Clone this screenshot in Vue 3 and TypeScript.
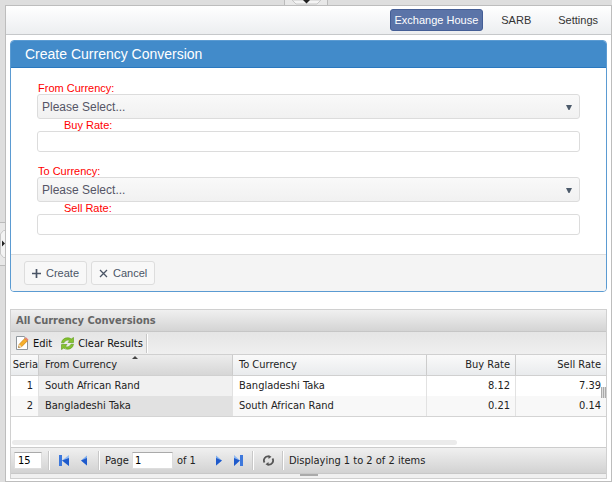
<script setup lang="ts">
import { ref } from 'vue'

interface Conversion {
  serial: number
  from: string
  to: string
  buy: string
  sell: string
}

const navItems = ['Exchange House', 'SARB', 'Settings']
const active = ref('Exchange House')

const fromCurrency = ref('')
const toCurrency = ref('')
const buyRate = ref('')
const sellRate = ref('')
const pageSize = ref('15')
const page = ref('1')

const currencies = ['South African Rand', 'Bangladeshi Taka']

const rows: Conversion[] = [
  { serial: 1, from: 'South African Rand', to: 'Bangladeshi Taka', buy: '8.12', sell: '7.39' },
  { serial: 2, from: 'Bangladeshi Taka', to: 'South African Rand', buy: '0.21', sell: '0.14' },
]

function reset() {
  fromCurrency.value = ''
  toCurrency.value = ''
  buyRate.value = ''
  sellRate.value = ''
}
</script>

<template>
  <div class="shell">
    <div class="split-top">
      <div class="tab-top">
        <svg width="29" height="5" viewBox="0 0 29 5">
          <path d="M0 0h29l-4 4H4z" fill="#f4f4f4" stroke="#c8c8c8" stroke-width="1" />
          <path d="M11 0h7l-3.5 3.5z" fill="#222" />
        </svg>
      </div>
    </div>
    <div class="split-left">
      <div class="tab-left">
        <svg width="5" height="28" viewBox="0 0 5 28">
          <path d="M5.5 .5h-2L.5 4v20l3 3.5h2" fill="#f4f4f4" stroke="#c8c8c8" />
          <path d="M2 10.5v6l3-3z" fill="#222" />
        </svg>
      </div>
    </div>

    <main class="main">
      <nav class="nav">
        <a
          v-for="item in navItems"
          :key="item"
          href="#"
          class="nav-link"
          :class="{ active: item === active }"
          @click.prevent="active = item"
        >{{ item }}</a>
      </nav>

      <form class="card" @submit.prevent>
        <h1 class="card-title">Create Currency Conversion</h1>
        <div class="card-body">
          <div class="group">
            <label class="label" for="from">From Currency:</label>
            <div class="select-box">
              <select id="from" v-model="fromCurrency" class="select">
                <option value="">Please Select...</option>
                <option v-for="c in currencies" :key="c">{{ c }}</option>
              </select>
              <svg class="arrow" width="6" height="5" viewBox="0 0 6 5"><path d="M0 0h6L3.5 5h-1z" fill="#4d5b6b" /></svg>
            </div>
            <label class="label indent" for="buy">Buy Rate:</label>
            <input id="buy" v-model="buyRate" class="text" type="text" />
          </div>
          <div class="group">
            <label class="label" for="to">To Currency:</label>
            <div class="select-box">
              <select id="to" v-model="toCurrency" class="select">
                <option value="">Please Select...</option>
                <option v-for="c in currencies" :key="c">{{ c }}</option>
              </select>
              <svg class="arrow" width="6" height="5" viewBox="0 0 6 5"><path d="M0 0h6L3.5 5h-1z" fill="#4d5b6b" /></svg>
            </div>
            <label class="label indent" for="sell">Sell Rate:</label>
            <input id="sell" v-model="sellRate" class="text" type="text" />
          </div>
        </div>
        <div class="card-foot">
          <button type="submit" class="btn">
            <svg width="9" height="9" viewBox="0 0 9 9"><path d="M4.5 0v9M0 4.5h9" stroke="#4a5566" stroke-width="1.7" /></svg>
            Create
          </button>
          <button type="button" class="btn" @click="reset">
            <svg width="9" height="9" viewBox="0 0 9 9"><path d="M1 1l7 7M8 1l-7 7" stroke="#4a5566" stroke-width="1.3" /></svg>
            Cancel
          </button>
        </div>
      </form>

      <section class="grid">
        <h2 class="grid-title">All Currency Conversions</h2>
        <div class="toolbar">
          <button type="button" class="tool">
            <svg width="13" height="14" viewBox="0 0 13 14">
              <path d="M.5 .5h8l3 3v10H.5z" fill="#fff" stroke="#8f969c" />
              <path d="M8.5 .5v3h3" fill="#dde3e8" stroke="#a9b0b6" stroke-width=".8" />
              <path d="M2.5 11.5l.8-3.3L8.8 2.5l2.5 2.4-5.6 5.8z" fill="#f6b02c" stroke="#c97d12" stroke-width=".7" />
              <path d="M8.8 2.5l1.2-1.2 2.5 2.4-1.2 1.2z" fill="#e98274" />
              <path d="M2.5 11.5l.8-3.3 2.4 2.5z" fill="#f3dfba" />
              <path d="M2.5 11.5l.3-1.2.9.9z" fill="#333" />
            </svg>
            Edit
          </button>
          <button type="button" class="tool">
            <svg width="13" height="13" viewBox="0 0 13 13" fill="#86c232" stroke="#5a9a16" stroke-width=".6">
              <path d="M.5 5.8C1 2.5 3.5 .8 6.5 .8c1.5 0 2.8.4 3.7 1.2L12.500 .5v5H7l1.8-1.9C7 2.6 4.3 3 3 5.8z" />
              <path d="M12.500 7.2c-.5 3.3-3 5-6 5-1.5 0-2.8-.4-3.7-1.2L.5 12.5v-5H6L4.2 9.4C6 10.4 8.7 10 10 7.2z" />
            </svg>
            Clear Results
          </button>
          <span class="sep"></span>
        </div>

        <div class="table-area">
          <table class="table">
            <colgroup>
              <col class="c-serial" /><col class="c-name" /><col class="c-name" /><col class="c-buy" /><col />
            </colgroup>
            <thead>
              <tr>
                <th>Seria</th>
                <th class="sorted">
                  From Currency
                  <svg class="sort" width="6" height="3" viewBox="0 0 6 3"><path d="M0 3l3-3 3 3z" fill="#444" /></svg>
                </th>
                <th>To Currency</th>
                <th class="num">Buy Rate</th>
                <th class="num">Sell Rate</th>
              </tr>
            </thead>
            <tbody>
              <tr v-for="r in rows" :key="r.serial">
                <td class="num">{{ r.serial }}</td>
                <td class="sorted">{{ r.from }}</td>
                <td>{{ r.to }}</td>
                <td class="num">{{ r.buy }}</td>
                <td class="num">{{ r.sell }}</td>
              </tr>
            </tbody>
          </table>
          <div class="grip"></div>
          <div class="scroll-x"><div class="thumb"></div></div>
        </div>

        <div class="pager">
          <input v-model="pageSize" class="box size" type="text" aria-label="Page size" />
          <span class="sep"></span>
          <button type="button" class="icon" aria-label="First page">
            <svg width="11" height="11" viewBox="0 0 11 11">
              <path d="M0 0h3v11H0z" fill="#3d78dc" /><path d="M10 0v11L3 5.5z" fill="#8db8f3" /><path d="M10 3v8L3 5.5z" fill="#1f5acb" />
            </svg>
          </button>
          <button type="button" class="icon" aria-label="Previous page">
            <svg width="11" height="11" viewBox="0 0 11 11"><path d="M8 .5v10L2 5.5z" fill="#7babed" /><path d="M8 3v7.5L2 5.5z" fill="#1f5acb" /></svg>
          </button>
          <span class="sep"></span>
          <label class="page" for="page">Page</label>
          <input id="page" v-model="page" class="box number" type="text" />
          <span class="of">of 1</span>
          <button type="button" class="icon" aria-label="Next page">
            <svg width="11" height="11" viewBox="0 0 11 11"><path d="M3 .5v10l6-5z" fill="#7babed" /><path d="M3 3v7.5l6-5z" fill="#1f5acb" /></svg>
          </button>
          <button type="button" class="icon" aria-label="Last page">
            <svg width="11" height="11" viewBox="0 0 11 11">
              <path d="M7 0h3v11H7z" fill="#3d78dc" /><path d="M1 0v11l6-5.5z" fill="#8db8f3" /><path d="M1 3v8l6-5.5z" fill="#1f5acb" />
            </svg>
          </button>
          <span class="sep"></span>
          <button type="button" class="icon" aria-label="Refresh">
            <svg width="11" height="11" viewBox="0 0 11 11" fill="none" stroke="#555" stroke-width="1.8">
              <path d="M1.5 7.5A4 4 0 0 1 6 1.6M9.5 3.5A4 4 0 0 1 5 9.4" />
              <path d="M5.5 0l3 1.8-3 2.2zM5.5 11l-3-1.8 3-2.2z" fill="#555" stroke="none" />
            </svg>
          </button>
          <span class="sep"></span>
          <span class="status">Displaying 1 to 2 of 2 items</span>
        </div>
        <div class="resizer"><span class="resizer-grip"></span></div>
      </section>
    </main>
  </div>
</template>

<style>
body {
  background: #dedede;
}
</style>

<style scoped>
.shell {
  display: grid;
  grid-template-columns: 5px 1fr;
  grid-template-rows: 5px 1fr;
  min-height: 100vh;
  font-family: "Liberation Sans", Arial, sans-serif;
  font-size: 11px;
}
.shell * {
  box-sizing: border-box;
}
svg {
  display: block;
  flex: none;
}
button,
input,
select {
  font: inherit;
  margin: 0;
}
.split-top {
  grid-column: 1 / 3;
  display: flex;
  justify-content: center;
}
.tab-top {
  display: flex;
  justify-content: center;
  width: 44px;
  background: #e8e8e8;
  border: solid #bbb;
  border-width: 0 1px;
}
.split-left {
  display: flex;
  align-items: center;
}
.tab-left {
  display: flex;
  align-items: center;
  height: 44px;
  background: #e8e8e8;
  border: solid #bbb;
  border-width: 1px 0;
}
.main {
  min-width: 0;
  background: #fff;
  border: 1px solid #bdbdbd;
}
.nav {
  display: flex;
  justify-content: flex-end;
  align-items: center;
  gap: 9px;
  height: 29px;
  padding: 0 4px;
  background: linear-gradient(#fff, #eceef0);
  border-bottom: 1px solid #c6c8ca;
}
.nav-link {
  padding: 0 8px;
  height: 22px;
  line-height: 20px;
  border: 1px solid transparent;
  border-radius: 3px;
  color: #333;
  text-decoration: none;
}
.nav-link.active {
  padding: 0 4px;
  background: #5b74a8;
  border-color: #445e96;
  color: #fff;
}
.card {
  margin: 5px 4px 0;
  border: 1px solid #5b9bd2;
  border-radius: 4px;
  overflow: hidden;
}
.card-title {
  margin: 0;
  height: 27px;
  padding: 0 14px;
  line-height: 27px;
  font-size: 14px;
  font-weight: 400;
  color: #fff;
  background: #428bca;
  border-bottom: 1px solid #2a78bf;
}
.card-body {
  display: flex;
  flex-direction: column;
  gap: 12px;
  padding: 13px 26px 19px;
}
.group {
  display: flex;
  flex-direction: column;
}
.label {
  height: 13px;
  padding-left: 1px;
  line-height: 15px;
  overflow: hidden;
  color: #f00;
}
.label.indent {
  padding-left: 27px;
}
.select-box {
  display: grid;
  align-items: center;
}
.select,
.arrow {
  grid-area: 1 / 1;
}
.arrow {
  justify-self: end;
  margin: 2px 8px 0 0;
  pointer-events: none;
}
.select {
  appearance: none;
  width: 100%;
  height: 25px;
  margin-bottom: -1px;
  padding: 0 20px 0 4px;
  font-size: 12px;
  color: #556;
  background: linear-gradient(#f9f9f9, #f1f1f1);
  border: 1px solid #dcdcdc;
  border-radius: 3px;
}
.text {
  width: 100%;
  height: 21px;
  padding: 0 4px;
  background: #fff;
  border: 1px solid #dcdcdc;
  border-radius: 3px;
}
.card-foot {
  display: flex;
  gap: 4px;
  padding: 6px 13px;
  background: #f4f4f4;
  border-top: 1px solid #ddd;
}
.btn {
  display: flex;
  align-items: center;
  gap: 5px;
  height: 24px;
  padding: 0 7px;
  color: #4a5566;
  background: #f8f8f8;
  border: 1px solid #ddd;
  border-radius: 3px;
}
.grid {
  margin: 17px 4px 2px;
  border: 1px solid #d0d0d0;
  font-family: "DejaVu Sans Condensed", "DejaVu Sans", Tahoma, sans-serif;
  color: #222;
}
.grid-title {
  margin: 0;
  height: 22px;
  padding: 0 5px;
  line-height: 21px;
  font-size: 11px;
  font-weight: 700;
  color: #666;
  background: linear-gradient(#f0f0f0, #d4d4d4);
  border-bottom: 1px solid #c6c6c6;
}
.toolbar {
  display: flex;
  align-items: center;
  gap: 9px;
  height: 23px;
  padding: 0 5px;
  background: linear-gradient(#e5e5e5, #efefef);
  border-bottom: 1px solid #d0d0d0;
}
.tool,
.icon {
  display: flex;
  align-items: center;
  gap: 4px;
  padding: 0;
  color: #111;
  background: none;
  border: 0;
}
.sep {
  width: 2px;
  height: 19px;
  background: #fff;
  border-left: 1px solid #c8c8c8;
}
.toolbar .sep {
  margin-left: -6px;
}
.table-area {
  position: relative;
  height: 92px;
  background: #fff;
}
.table {
  width: 100%;
  table-layout: fixed;
  border-collapse: separate;
  border-spacing: 0;
  border-bottom: 1px solid #d4d4d4;
}
.c-serial {
  width: 28px;
}
.c-name {
  width: 194px;
}
.c-buy {
  width: 89px;
}
.table th,
.table td {
  height: 20px;
  padding: 0 5px 0 6px;
  font-weight: 400;
  line-height: 20px;
  text-align: left;
  white-space: nowrap;
  overflow: hidden;
  border-right: 1px solid #e2e2e2;
}
.table th {
  position: relative;
  height: 21px;
  background: linear-gradient(#fafafa, #e9ebed);
  border-right-color: #ccc;
  border-bottom: 1px solid #d0d0d0;
}
.table th:first-child {
  padding: 0;
  text-align: right;
}
.table th:last-child,
.table td:last-child {
  border-right: 0;
}
.table th.sorted {
  background: linear-gradient(#ededed, #d6d6d6);
}
.sort {
  position: absolute;
  top: 1px;
  left: 48%;
}
.table .num {
  text-align: right;
}
.table td.sorted {
  background: #f1f1f1;
}
.table tr:nth-child(2) td {
  background: #f8f8f8;
}
.table tr:nth-child(2) td.sorted {
  background: #e1e1e1;
}
.grip {
  position: absolute;
  top: 32px;
  right: 0;
  width: 5px;
  height: 11px;
  background: repeating-linear-gradient(90deg, #aaa 0 1px, #ddd 1px 2px);
}
.scroll-x {
  position: absolute;
  left: 1px;
  right: 1px;
  bottom: 2px;
}
.thumb {
  width: 75%;
  height: 5px;
  border-radius: 3px;
  background: #ebebeb;
}
.pager {
  display: flex;
  align-items: center;
  height: 27px;
  padding: 0 3px;
  background: linear-gradient(#f0f0f0, #d2d2d2);
  border-top: 1px solid #ccc;
  border-bottom: 1px solid #c8c8c8;
}
.box {
  height: 17px;
  background: #fff;
  border: 1px solid #ddd;
  border-top-color: #aaa;
}
.size {
  width: 28px;
  padding: 0 3px;
}
.number {
  width: 41px;
  padding: 0 2px;
  margin-left: 3px;
}
.icon {
  margin-left: 9px;
}
.pager .sep {
  margin-left: 6px;
}
.pager .icon + .sep {
  margin-left: 8px;
}
.page,
.status {
  margin-left: 5px;
}
.of {
  margin: 0 8px 0 4px;
}
.resizer {
  display: flex;
  justify-content: center;
  height: 4px;
  background: #f0f0f0;
}
.resizer-grip {
  width: 18px;
  height: 2px;
  background: #aaa;
}
</style>
